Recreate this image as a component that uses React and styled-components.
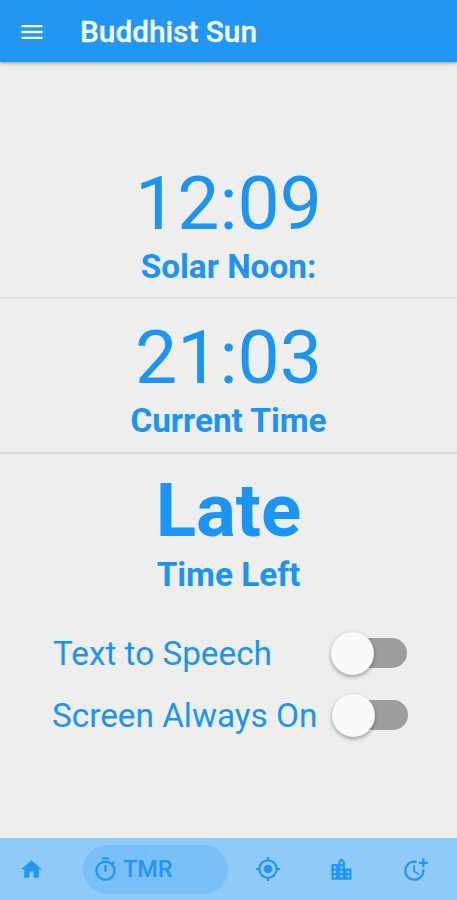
import React from "react";
import styled, { createGlobalStyle } from "styled-components";
import {
  MdGpsFixed,
  MdHome,
  MdLocationCity,
  MdMenu,
  MdMoreTime,
  MdOutlineTimer,
} from "react-icons/md";

const GlobalStyle = createGlobalStyle`
  * {
    box-sizing: border-box;
  }

  body {
    margin: 0;
    font-family: Roboto, sans-serif;
    background-color: #eeeeee;
  }
`;

const Screen = styled.div`
  display: flex;
  flex-direction: column;
  height: 900px;
  overflow: hidden;
  color: #1b94f3;
  background-color: #eeeeee;
`;

const AppBar = styled.header`
  display: flex;
  align-items: center;
  flex: none;
  height: 62px;
  padding: 1px 0 0 18px;
  color: #f4faff;
  background-color: #2296f3;
  box-shadow: 0 1px 4px rgba(0, 0, 0, 0.4);
`;

const MenuButton = styled.button`
  display: flex;
  width: 28px;
  padding: 0;
  border: 0;
  color: inherit;
  background: none;
`;

const Title = styled.h1`
  margin: 0 0 0 34px;
  font-size: 29.8px;
  font-weight: 500;
  line-height: 34px;
  -webkit-text-stroke: 0.3px currentColor;
`;

const Main = styled.main`
  flex: 1;
  padding-top: 82px;
`;

const Panel = styled.section`
  display: flex;
  flex-direction: column;
  align-items: center;
  height: 155px;
  padding-top: ${(props) => props.$top}px;
  border-bottom: ${(props) => (props.$divider ? `2px solid ${props.$divider}` : "0")};
`;

const Value = styled.div`
  font-size: ${(props) => (props.$bold ? 74.5 : 75)}px;
  font-weight: ${(props) => (props.$bold ? 700 : 400)};
  line-height: 88px;
`;

const Label = styled.div`
  margin-top: 1px;
  font-size: 33.3px;
  font-weight: 700;
  line-height: 38px;
`;

const Settings = styled.div`
  display: flex;
  flex-direction: column;
  padding: 13px 49px 0 52px;
`;

const Setting = styled.div`
  display: flex;
  align-items: center;
  justify-content: space-between;
  height: 62px;
  padding: ${(props) => (props.$inset ? "0 1px" : "0")};
  font-size: 33.3px;
  white-space: nowrap;
`;

const Track = styled.span`
  display: flex;
  align-items: center;
  width: 67px;
  height: 30px;
  border-radius: 15px;
  background-color: #9e9e9e;
`;

const Thumb = styled.span`
  flex: none;
  width: 43px;
  height: 43px;
  margin-left: -9px;
  border-radius: 50%;
  background-color: #fafafa;
  box-shadow: 0 2px 4px rgba(0, 0, 0, 0.35);
`;

const BottomBar = styled.nav`
  display: flex;
  align-items: center;
  flex: none;
  height: 62px;
  padding: 0 28px 0 19px;
  color: #2196f3;
  background-color: #90caf9;
`;

const Tab = styled.a`
  display: flex;
  flex: none;
  align-items: center;
  margin-left: ${(props) => props.$gap || 0}px;
`;

const ActiveTab = styled(Tab)`
  width: 145px;
  height: 49px;
  padding-left: 9px;
  border-radius: 25px;
  background-color: #79bff8;
`;

const TabText = styled.span`
  margin-left: 4px;
  font-size: 23.5px;
  font-weight: 500;
`;

const panels = [
  { value: "12:09", label: "Solar Noon:", top: 15, divider: "#e2e2e2" },
  { value: "21:03", label: "Current Time", top: 14, divider: "#d8d8d8" },
  { value: "Late", label: "Time Left", top: 13, bold: true },
];

const settings = [
  { name: "Text to Speech", inset: true },
  { name: "Screen Always On" },
];

const App = () => (
  <>
    <GlobalStyle />
    <Screen>
      <AppBar>
        <MenuButton aria-label="Menu">
          <MdMenu size={28} />
        </MenuButton>
        <Title>Buddhist Sun</Title>
      </AppBar>

      <Main>
        {panels.map((panel) => (
          <Panel key={panel.label} $top={panel.top} $divider={panel.divider}>
            <Value $bold={panel.bold}>{panel.value}</Value>
            <Label>{panel.label}</Label>
          </Panel>
        ))}

        <Settings>
          {settings.map(({ name, inset }) => (
            <Setting key={name} $inset={inset}>
              <span>{name}</span>
              <Track role="switch" aria-checked="false" aria-label={name}>
                <Thumb />
              </Track>
            </Setting>
          ))}
        </Settings>
      </Main>

      <BottomBar>
        <Tab>
          <MdHome size={25} />
        </Tab>
        <ActiveTab $gap={39}>
          <MdOutlineTimer size={27} />
          <TabText>TMR</TabText>
        </ActiveTab>
        <Tab $gap={27}>
          <MdGpsFixed size={26} />
        </Tab>
        <Tab $gap={47}>
          <MdLocationCity size={27} />
        </Tab>
        <Tab $gap={47}>
          <MdMoreTime size={27} />
        </Tab>
      </BottomBar>
    </Screen>
  </>
);

export default App;
